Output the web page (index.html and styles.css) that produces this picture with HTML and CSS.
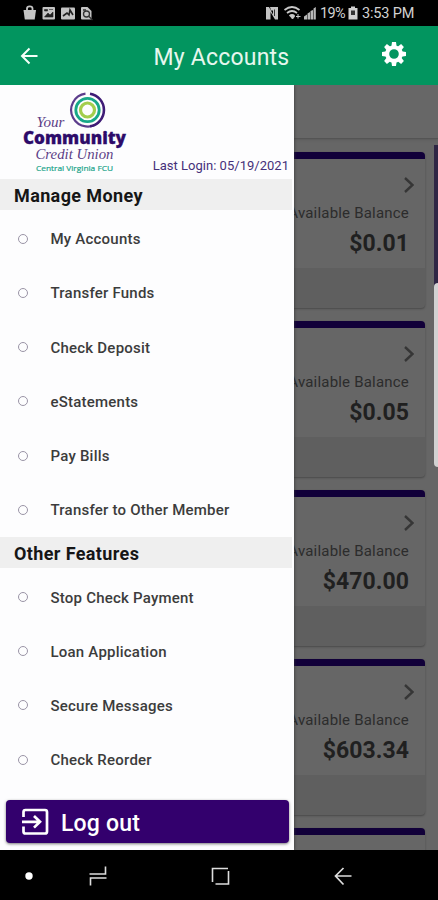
FILE: index.html
```html
<!DOCTYPE html>
<html lang="en">
<head>
<meta charset="utf-8">
<title>My Accounts</title>
<link rel="stylesheet" href="styles.css">
</head>
<body>
<div class="status">
  <svg class="status-left" width="72" height="26" viewBox="0 0 72 26">
    <g fill="#c4c4c4">
      <path d="M0.500 10h12.500l-1.300 9.500h-9.900z"/>
      <path d="M4 11v-2.500a2.700 2 0 0 1 5.500 0V11" fill="none" stroke="#c4c4c4" stroke-width="1.800"/>
      <rect x="19.500" y="7" width="12.500" height="12.500" rx="1"/>
      <rect x="38" y="7.500" width="14" height="12" rx="1"/>
      <path d="M58 8q0-1 1-1h5.500l4 4v8.500H59q-1 0-1-1z"/>
    </g>
    <path d="M21.500 17l3.500-4 2 2 3-3v5zM21.500 9.500h3v1.500h-3zM26 9.500h4" fill="#222" stroke="#222" stroke-width=".6"/>
    <path d="M40 16l4-3 2 2 1-5 3 5" fill="none" stroke="#222" stroke-width="1.600"/>
    <circle cx="63.500" cy="14" r="3" fill="none" stroke="#333" stroke-width="1.300"/>
    <path d="M65.500 16l4 4M60 10h3" stroke="#333" stroke-width="1.300"/>
  </svg>
  <div class="status-right">
    <svg width="52" height="26" viewBox="0 0 52 26">
      <path d="M1 19.500V7H4L8 14.500V10.500H6L5 7H13V19.500H10L5.500 12V19.500z" fill="#c4c4c4"/>
      <path d="M9.500 9.500V16" stroke="#333" stroke-width="1"/>
      <path d="M19.500 10q7.500-6 15 0M22 13q5-4 10 0M24.500 16q2.500-2 5 0" fill="none" stroke="#c8c8c8" stroke-width="1.700"/>
      <path d="M25.500 16.500h4l-2 2.500zM33 14v4.500M31 16.500h4.500" fill="#c8c8c8" stroke="#c8c8c8" stroke-width="1"/>
      <path d="M39 19.500v-3l3-2v5zM42.500 19.500v-6l2.500-1.500v7.500zM45.500 19.500v-8.500l2.500-1v9.500zM48.500 19.500v-11l2.300-1.500v12.500z" fill="#b8b8b8"/>
    </svg>
    <span class="percent">19%</span>
    <svg class="battery" width="10" height="26" viewBox="0 0 10 26">
      <path d="M3 6.500h4v1.500h2.500v11.500H.5V8H3z" fill="#d0d0d0"/>
      <path d="M3 10.500h4v4.500H3z" fill="#333"/>
    </svg>
    <span class="clock">3:53 PM</span>
  </div>
</div>
<header class="appbar">
  <svg class="back" width="18" height="18" viewBox="0 0 18 18"><path d="M9.500 1.500L2 9l7.500 7.500M2 9h15.500" fill="none" stroke="#f4fff8" stroke-width="2"/></svg>
  <h1>My Accounts</h1>
  <svg class="gear" width="26" height="26" viewBox="-13 -13 26 26">
    <g fill="#fff">
      <g id="teeth"><path id="t" d="M-2.700-7L-2-12H2L2.700-7zM-2.700 7L-2 12H2L2.700 7z"/><use href="#t" transform="rotate(45)"/></g>
      <use href="#teeth" transform="rotate(90)"/>
    </g>
    <circle r="6.800" fill="none" stroke="#fff" stroke-width="4"/>
  </svg>
</header>
<main class="stage">
  <div class="accounts">
    <div class="toolbar"></div>
    <div class="list">
      <section class="card"><div class="body"><svg class="chev" width="12" height="18" viewBox="0 0 12 18"><path d="M2 2l7.500 7L2 16"/></svg><p class="label">Available Balance</p><p class="amount">$0.01</p></div></section>
      <section class="card"><div class="body"><svg class="chev" width="12" height="18" viewBox="0 0 12 18"><path d="M2 2l7.500 7L2 16"/></svg><p class="label">Available Balance</p><p class="amount">$0.05</p></div></section>
      <section class="card"><div class="body"><svg class="chev" width="12" height="18" viewBox="0 0 12 18"><path d="M2 2l7.500 7L2 16"/></svg><p class="label">Available Balance</p><p class="amount">$470.00</p></div></section>
      <section class="card"><div class="body"><svg class="chev" width="12" height="18" viewBox="0 0 12 18"><path d="M2 2l7.500 7L2 16"/></svg><p class="label">Available Balance</p><p class="amount">$603.34</p></div></section>
      <section class="card"><div class="body"></div></section>
    </div>
  </div>
  <div class="scroll-track"></div>
  <div class="edge-handle"></div>
  <aside class="drawer">
    <div class="brand">
      <svg class="logo" width="112" height="86" viewBox="0 0 112 86">
        <g fill="none">
          <path d="M64.500 8.700A16.500 16.500 0 1 0 79 36" stroke="#5c3d8c" stroke-width="2.200"/>
          <path d="M69 8.700A16.500 16.500 0 0 1 69 41.300" stroke="#3f1c76" stroke-width="2.600"/>
          <circle cx="66.500" cy="25" r="11.700" stroke="#18a888" stroke-width="2.800"/>
          <circle cx="66.500" cy="25" r="7" stroke="#a3ce4d" stroke-width="3.200"/>
        </g>
        <text class="lg-serif" x="15.500" y="42" font-size="14.500" textLength="28" lengthAdjust="spacingAndGlyphs">Your</text>
        <text class="lg-bold" x="2" y="58.500" font-size="18" textLength="103" lengthAdjust="spacingAndGlyphs">Community</text>
        <text class="lg-serif" x="14.500" y="74" font-size="14.500" textLength="78" lengthAdjust="spacingAndGlyphs">Credit Union</text>
        <text class="lg-small" x="15" y="86" font-size="8" textLength="77" lengthAdjust="spacingAndGlyphs">Central Virginia FCU</text>
      </svg>
      <p class="login">Last Login: 05/19/2021</p>
    </div>
    <h2>Manage Money</h2>
    <ul>
      <li>My Accounts</li>
      <li>Transfer Funds</li>
      <li>Check Deposit</li>
      <li>eStatements</li>
      <li>Pay Bills</li>
      <li>Transfer to Other Member</li>
    </ul>
    <h2>Other Features</h2>
    <ul>
      <li>Stop Check Payment</li>
      <li>Loan Application</li>
      <li>Secure Messages</li>
      <li>Check Reorder</li>
    </ul>
    <button class="logout">
      <svg width="28" height="28" viewBox="0 0 28 28"><path d="M2.500 9V4q0-2 2-2H24q2 0 2 2v19.500q0 2-2 2H4.500q-2 0-2-2v-5M1 13.800h17M13 8l6 5.800L13 19.600" fill="none" stroke="#fff" stroke-width="2.700"/></svg>
      <span>Log out</span>
    </button>
  </aside>
</main>
<nav class="navbar">
  <svg width="438" height="50" viewBox="0 0 438 50">
    <circle cx="29" cy="26" r="3.700" fill="#fff"/>
    <path d="M89.500 24H105.500V16.500M106.500 28H90.500V35.500" fill="none" stroke="#ddd" stroke-width="1.600"/>
    <path d="M212.500 32V18.500H228M228.500 21V34H215.500" fill="none" stroke="#ddd" stroke-width="1.600"/>
    <path d="M343.500 18L335.500 26L343.500 34.500M335.500 26H351.500" fill="none" stroke="#ddd" stroke-width="1.700"/>
  </svg>
</nav>
</body>
</html>
```
FILE: styles.css
```css
*, *::before { box-sizing: border-box; margin: 0; padding: 0; }
body {
  width: 438px; height: 900px; overflow: hidden;
  display: flex; flex-direction: column;
  font-family: Roboto, "Liberation Sans", sans-serif;
  background: #000;
}
.status {
  height: 26px; background: #000; color: #d2d2d2;
  display: flex; justify-content: space-between;
  padding: 0 24px 0 23px; flex: none;
}
.status-right { display: flex; font-size: 14.5px; line-height: 28px; }
.percent { width: 27px; margin-left: 3px; letter-spacing: -0.6px; }
.battery { margin-left: 1px; }
.clock { width: 52px; margin-left: 4px; letter-spacing: -0.15px; white-space: nowrap; }
.appbar {
  height: 59px; background: #02955f; flex: none;
  display: flex; align-items: center; padding: 0 31px 0 20px;
}
.back { margin-top: 1px; }
h1 {
  flex: 1; margin-left: 115.5px; padding-top: 5px;
  font-size: 23px; line-height: 30px; font-weight: 400; color: #e6f7ee; letter-spacing: 0.2px;
}
.gear { margin-top: -3px; }
.stage { position: relative; height: 765px; flex: none; overflow: hidden; background: #666; }
.toolbar { height: 54px; background: #676767; border-bottom: 1px solid #545454; box-shadow: 0 1px 2px #5a5a5a; }
.list { padding: 13px 13px 0 10px; display: flex; flex-direction: column; gap: 13.1px; }
.card {
  height: 156px; flex: none; background: #5f5f5f; overflow: hidden;
  border-top: 7px solid #110039; border-radius: 4px;
  box-shadow: 0 1px 2px #484848;
}
.body {
  height: 109px; background: #666; padding: 17px 16px 0;
  display: flex; flex-direction: column; align-items: flex-end;
}
.chev { fill: none; stroke: #363636; stroke-width: 2.4; margin-right: -6px; }
.label { font-size: 15px; line-height: 20px; color: #2c2c2c; margin-top: 9px; letter-spacing: 0.2px; }
.amount { font-size: 23px; line-height: 30px; font-weight: 700; color: #202020; margin-top: 6px; letter-spacing: 0.05px; }
.scroll-track { position: absolute; left: 434px; top: 60px; width: 4px; height: 150px; background: #2f2644; }
.edge-handle { position: absolute; left: 434px; top: 198px; width: 8px; height: 184px; border-radius: 5px; background: #d2d2d2; }
.drawer {
  position: absolute; left: 0; top: 0; width: 294px; height: 765px;
  background: #fdfdfe; box-shadow: 0 0 3px #333;
  display: flex; flex-direction: column;
}
.brand { height: 94px; flex: none; display: flex; justify-content: space-between; padding: 0 5px 0 21px; }
.logo { flex: none; overflow: visible; }
.lg-serif { font-family: "Liberation Serif", serif; font-style: italic; fill: #5c3d86; }
.lg-bold { font-family: "Open Sans", sans-serif; font-weight: 800; fill: #2d0b69; stroke: #2d0b69; stroke-width: 0.3; }
.lg-small { font-family: "Open Sans", sans-serif; fill: #21a48a; stroke: #21a48a; stroke-width: 0.2; }
.login { align-self: flex-end; margin-bottom: 4px; font-size: 13px; line-height: 18px; color: #46307a; letter-spacing: 0.02px; white-space: nowrap; }
h2 {
  height: 31px; flex: none; background: #efefef; padding-left: 14px; margin-right: 2px;
  font-size: 18px; line-height: 34px; font-weight: 700; color: #161616; letter-spacing: 0.38px;
}
ul { list-style: none; padding-top: 2.2px; }
li {
  height: 54.2px; display: flex; align-items: center;
  padding-left: 18px; gap: 22.5px;
  font-size: 15px; font-weight: 500; color: #3c3c3c; letter-spacing: 0.22px;
}
li::before { content: ""; width: 10px; height: 10px; margin-top: -1px; border: 1.5px solid #9a94a6; border-radius: 50%; }
.logout {
  margin: auto 5px 7px 6px; height: 43px; border: 0; border-radius: 4px;
  background: #33006d; box-shadow: 0 1px 3px #777; color: #fff;
  display: flex; align-items: center; gap: 12px; padding-left: 15px;
  font: 500 23px/30px Roboto, sans-serif; letter-spacing: 0.2px;
}
.logout span { padding-top: 4px; }
.navbar { height: 50px; flex: none; background: #000; }
```
